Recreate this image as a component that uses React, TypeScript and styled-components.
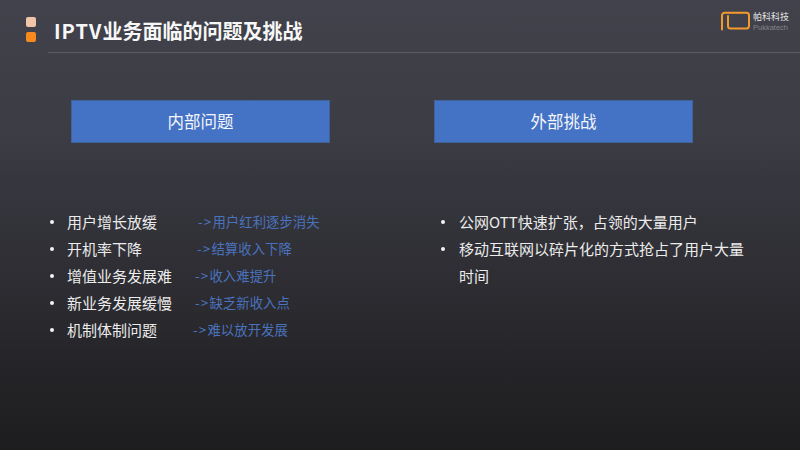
import React from "react";
import styled, { createGlobalStyle } from "styled-components";

const GlobalStyle = createGlobalStyle`
  html, body {
    margin: 0;
    padding: 0;
    background: #2c2c31;
  }
`;

const Slide = styled.div`
  width: 800px;
  height: 450px;
  overflow: hidden;
  background: linear-gradient(180deg, #41424b 0%, #3b3c44 30%, #2f2f35 58%, #1d1d1f 100%);
  font-family: "Noto Sans CJK SC", "Liberation Sans", sans-serif;
  color: #f2f2f2;
`;

const Header = styled.header`
  height: 53px;
  display: flex;
  align-items: flex-start;
`;

const Marks = styled.div`
  width: 48px;
  padding: 17px 0 0 26px;
  box-sizing: border-box;
  display: flex;
  flex-direction: column;
  gap: 5px;
`;

const Mark = styled.span<{ $color: string }>`
  width: 10px;
  height: 10px;
  border-radius: 2px;
  background: ${(p) => p.$color};
`;

const TitleBar = styled.div`
  flex: 1;
  height: 53px;
  box-sizing: border-box;
  border-bottom: 1px solid #5b5b60;
  padding: 0 11px 0 6px;
  display: flex;
  justify-content: space-between;
`;

const Title = styled.h1`
  margin: 18px 0 0;
  font-size: 20px;
  line-height: 26px;
  font-weight: 700;
  color: #f7f7f7;
`;

const TitleLatin = styled.span`
  letter-spacing: 1px;
`;

const Logo = styled.div`
  display: flex;
  gap: 3px;
  padding-top: 11px;
`;

const LogoText = styled.div`
  display: flex;
  flex-direction: column;
  margin-top: -1px;
`;

const LogoCn = styled.span`
  font-size: 9px;
  line-height: 13px;
  color: #e4e4e4;
`;

const LogoEn = styled.span`
  font-family: "Liberation Sans", sans-serif;
  font-size: 7.5px;
  line-height: 9px;
  color: #85858a;
`;

const Columns = styled.main`
  display: grid;
  grid-template-columns: 363px 1fr;
  padding: 47px 0 0 71px;
`;

const Column = styled.section``;

const Banner = styled.div`
  width: 259px;
  height: 43px;
  box-sizing: border-box;
  border: 1px solid #3f6298;
  background: #4472c4;
  display: flex;
  align-items: center;
  justify-content: center;
  font-size: 16.5px;
  line-height: 20px;
  padding-bottom: 1px;
  color: #f4f6fb;
`;

const List = styled.ul<{ $width: number; $left: number }>`
  list-style: none;
  margin: 65px 0 0 ${(p) => p.$left}px;
  padding: 0;
  width: ${(p) => p.$width}px;
`;

const Item = styled.li`
  display: flex;
  font-size: 15px;
  line-height: 27px;
  color: #ececec;
`;

const Bullet = styled.span<{ $width: number }>`
  width: ${(p) => p.$width}px;
  height: 27px;
  flex: none;
  display: flex;
  align-items: center;

  &::before {
    content: "";
    width: 4px;
    height: 4px;
    border-radius: 50%;
    background: #f4f4f4;
  }
`;

const ItemText = styled.span``;

const Label = styled.span<{ $width: number }>`
  width: ${(p) => p.$width}px;
  flex: none;
`;

const Note = styled.span`
  font-size: 13.4px;
  color: #4a72bd;
  white-space: nowrap;
`;

const Arrow = styled.span`
  letter-spacing: 1.2px;
`;

const issues = [
  { label: "用户增长放缓", width: 131, note: "用户红利逐步消失" },
  { label: "开机率下降", width: 130, note: "结算收入下降" },
  { label: "增值业务发展难", width: 128, note: "收入难提升" },
  { label: "新业务发展缓慢", width: 128, note: "缺乏新收入点" },
  { label: "机制体制问题", width: 126, note: "难以放开发展" },
];

const challenges = [
  "公网OTT快速扩张，占领的大量用户",
  "移动互联网以碎片化的方式抢占了用户大量时间",
];

const App = () => (
  <Slide>
    <GlobalStyle />
    <Header>
      <Marks>
        <Mark $color="#f0c6a8" />
        <Mark $color="#f7891f" />
      </Marks>
      <TitleBar>
        <Title>
          <TitleLatin>IPTV</TitleLatin>业务面临的问题及挑战
        </Title>
        <Logo>
          <svg width="30" height="21" viewBox="0 0 30 21" fill="none">
            <path
              d="M2 18.5V4.5C2 2.8 3 1.7 4.8 1.7H26.5C28.2 1.7 29 2.8 29 4.5V14.8C29 16.5 28.2 17.5 26.5 17.5H10.5C9 17.5 8 16.6 8 15V5"
              stroke="#f39a2e"
              strokeWidth="2"
              strokeLinecap="round"
            />
          </svg>
          <LogoText>
            <LogoCn>帕科科技</LogoCn>
            <LogoEn>Pukkatech</LogoEn>
          </LogoText>
        </Logo>
      </TitleBar>
    </Header>
    <Columns>
      <Column>
        <Banner>内部问题</Banner>
        <List $width={300} $left={-21}>
          {issues.map((issue) => (
            <Item key={issue.label}>
              <Bullet $width={17} />
              <Label $width={issue.width}>{issue.label}</Label>
              <Note>
                <Arrow>-&gt;</Arrow>
                {issue.note}
              </Note>
            </Item>
          ))}
        </List>
      </Column>
      <Column>
        <Banner>外部挑战</Banner>
        <List $width={305} $left={7}>
          {challenges.map((text) => (
            <Item key={text}>
              <Bullet $width={18} />
              <ItemText>{text}</ItemText>
            </Item>
          ))}
        </List>
      </Column>
    </Columns>
  </Slide>
);

export default App;
